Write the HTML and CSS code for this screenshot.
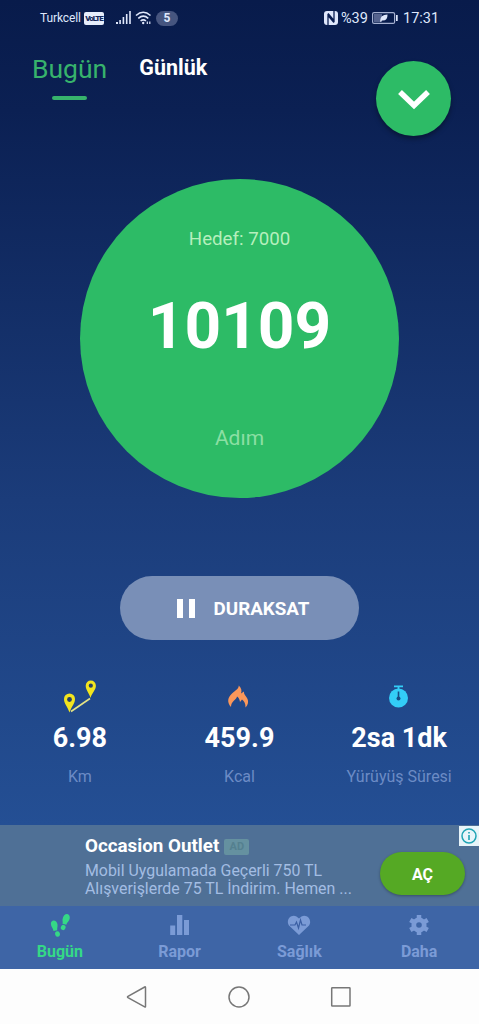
FILE: index.html
```html
<!DOCTYPE html>
<html lang="tr">
<head>
    <meta charset="UTF-8">
    <meta name="viewport" content="width=device-width, initial-scale=1.0">
    <title>Adımsayar</title>
    <link rel="stylesheet" href="styles.css">
</head>
<body>
    <div class="app">
        <div class="status-bar">
            <div class="status-left">
                <span class="carrier">Turkcell</span>
                <span class="volte">VoLTE</span>
                <svg class="signal" width="15" height="14" viewBox="0 0 15 14" fill="#dfe7fb">
                    <rect x="0" y="11" width="2" height="2"/>
                    <rect x="3.3" y="9" width="1.6" height="4"/>
                    <rect x="6.6" y="6" width="1.6" height="7"/>
                    <rect x="9.9" y="3" width="1.6" height="10"/>
                    <rect x="13.2" y="0" width="1.6" height="13"/>
                </svg>
                <svg class="wifi" width="17" height="14" viewBox="0 0 17 14" fill="none" stroke="#dfe7fb" stroke-width="1.6">
                    <path d="M1 4.5q7.200 -6.500 14.500 0M3.300 7.300q5 -4.300 10 0M5.600 10q2.700 -2.200 5.400 0"/>
                    <circle cx="8.200" cy="12" r="1.200" fill="#dfe7fb" stroke="none"/>
                    <path d="M12.300 10.500v2.500M14.800 10.500v2.500" stroke-width="1.200"/>
                </svg>
                <span class="badge">5</span>
            </div>
            <div class="status-right">
                <svg width="14" height="14" viewBox="0 0 14 14">
                    <rect width="14" height="14" rx="3" fill="#dfe7fb"/>
                    <path d="M4 14V4.500L10 11.500M10 0v9.500L4 2.500" fill="none" stroke="#0a1d50" stroke-width="1.300"/>
                </svg>
                <span class="percent">%39</span>
                <svg class="battery" width="26" height="12" viewBox="0 0 26 12">
                    <rect x=".6" y=".6" width="22" height="10.800" rx="1.500" fill="none" stroke="#a5b0d0" stroke-width="1.200"/>
                    <rect x="2" y="2" width="8" height="8" fill="#56648f"/>
                    <path d="M8 9.500q0-7 7.500-7q.3 6.500-5.500 6l-1.300 1.300z" fill="#dfe7fb"/>
                    <rect x="24" y="3" width="1.700" height="6" fill="#dfe7fb"/>
                </svg>
                <span class="clock">17:31</span>
            </div>
        </div>

        <div class="header">
            <div class="tab active">Bugün</div>
            <div class="tab">Günlük</div>
            <div class="expand-btn">
                <svg width="34" height="22" viewBox="0 0 34 22" fill="none" stroke="#fff" stroke-width="5.500">
                    <path d="M3 3l14 13.500l14-13.500"/>
                </svg>
            </div>
        </div>

        <div class="steps-circle">
            <div class="goal">Hedef: 7000</div>
            <div class="steps">10109</div>
            <div class="steps-label">Adım</div>
        </div>

        <div class="pause-btn">
            <svg width="18" height="20" viewBox="0 0 18 20" fill="#fff">
                <rect width="6" height="19"/>
                <rect x="12" width="6" height="19"/>
            </svg>
            <span>DURAKSAT</span>
        </div>

        <div class="stats">
            <div class="stat">
                <svg width="34" height="34" viewBox="0 0 34 34">
                    <path d="M8 32.500L27 19.500" stroke="#e5e385" stroke-width="1.600"/>
                    <path d="M6.500 33.500C4.500 27.500 1 24.500 1 20a5.500 5.500 0 0 1 11 0C12 24.500 8.500 27.500 6.500 33.500z" fill="#f3e51e"/>
                    <path d="M27.500 19C26 13.500 22.700 11 22.700 6.700a5 5 0 0 1 10.200 0C32.900 11 29 13.500 27.500 19z" fill="#f3e51e"/>
                    <circle cx="6.500" cy="20.500" r="2.400" fill="#294064"/>
                    <circle cx="27.800" cy="6.700" r="2.100" fill="#294064"/>
                </svg>
                <div class="value">6.98</div>
                <div class="label">Km</div>
            </div>
            <div class="stat">
                <svg width="34" height="34" viewBox="0 0 34 34" fill="#fb975a">
                    <path d="M9 28C4.500 23 6 18 10 14.500C14 11 16.500 10 16.800 6.500C19.500 9 20 12 19 14.500L22 12.500C21.500 15 23.500 16.500 25 19C27 22.500 26 26 23.500 28.500C23.500 24.500 22.500 22.500 20 20.500L18 23C17.500 20 16.500 18.500 15 17.500C14.500 21 9 22 9 28z"/>
                </svg>
                <div class="value">459.9</div>
                <div class="label">Kcal</div>
            </div>
            <div class="stat">
                <svg width="34" height="34" viewBox="0 0 34 34">
                    <circle cx="16.500" cy="19" r="9.500" fill="#33cdf7"/>
                    <path d="M12 7.300h9M16.500 6.500v4" stroke="#33cdf7" stroke-width="1.800"/>
                    <path d="M16.500 12.500v7" stroke="#174c86" stroke-width="1.600"/>
                    <circle cx="16.500" cy="19.500" r="2" fill="#174c86"/>
                </svg>
                <div class="value">2sa 1dk</div>
                <div class="label">Yürüyüş Süresi</div>
            </div>
        </div>

        <div class="ad">
            <div class="ad-text">
                <div class="ad-title">Occasion Outlet <span class="ad-tag">AD</span></div>
                <div class="ad-desc">Mobil Uygulamada Geçerli 750 TL<br>Alışverişlerde 75 TL İndirim. Hemen ...</div>
            </div>
            <div class="ad-btn">AÇ</div>
            <svg class="ad-info" width="20" height="20" viewBox="0 0 20 20">
                <rect width="20" height="20" fill="#e8f5fa"/>
                <circle cx="10" cy="10" r="7" fill="none" stroke="#20a4b5" stroke-width="1.500"/>
                <path d="M10 9v5M10 6v1.600" stroke="#20a4b5" stroke-width="1.600"/>
            </svg>
        </div>

        <div class="bottom-nav">
            <div class="nav-item active">
                <svg width="24" height="26" viewBox="0 0 24 26" fill="#35d886">
                    <path d="M2.900 11C2.500 6.500 8.800 6 9.500 11.500C9.800 14 8.800 15.500 9.300 17.300L5.500 18C5 15 3.200 14 2.900 11z"/>
                    <ellipse cx="9.500" cy="21" rx="2.400" ry="2.700" transform="rotate(-12 9.500 21)"/>
                    <path d="M14.500 6.500C15.500 -.5 22.500 -.5 21.700 5.500C21.300 8.500 19 9 18.300 11.800L14.500 10.800C15 9 14.400 8.500 14.500 6.500z"/>
                    <ellipse cx="15.200" cy="14.500" rx="2.300" ry="2.600" transform="rotate(25 15.200 14.500)"/>
                </svg>
                <span>Bugün</span>
            </div>
            <div class="nav-item">
                <svg width="24" height="26" viewBox="0 0 24 26" fill="#7b9bd6">
                    <rect x="2.200" y="12.500" width="5" height="9.500"/>
                    <rect x="9" y="2" width="5.300" height="20"/>
                    <rect x="16" y="7" width="5" height="15"/>
                </svg>
                <span>Rapor</span>
            </div>
            <div class="nav-item">
                <svg width="24" height="26" viewBox="0 0 24 26">
                    <path d="M12 22L2.500 13C-2 8 3.500 .5 9.500 3.500L12 5.500l2.500-2C20.500 .5 26 8 21.500 13z" fill="#7b9bd6"/>
                    <path d="M3 12h5l1.500-3l2 6l2-8l1.500 5h4" fill="none" stroke="#3b5fa3" stroke-width="1.200"/>
                </svg>
                <span>Sağlık</span>
            </div>
            <div class="nav-item">
                <svg width="24" height="26" viewBox="0 0 24 26" fill="none" stroke="#7b9bd6">
                    <circle cx="12" cy="12" r="5.200" stroke-width="4.800"/>
                    <path d="M12 2v4M12 18v4M3.300 7l3.500 2M17.200 15l3.500 2M3.300 17l3.500-2M17.200 9l3.500-2" stroke-width="4.500"/>
                </svg>
                <span>Daha</span>
            </div>
        </div>

        <div class="system-nav">
            <svg width="22" height="22" viewBox="0 0 22 22"><path d="M19.500 1.500v19q0 .8-.8.4L2 11.700q-1-.7 0-1.400L18.700 1q.8-.4.8.5z"/></svg>
            <svg width="22" height="22" viewBox="0 0 22 22"><circle cx="11" cy="11" r="10"/></svg>
            <svg width="22" height="22" viewBox="0 0 22 22"><rect x="1.700" y="1.700" width="18.300" height="18.300" rx=".6"/></svg>
        </div>
    </div>
</body>
</html>
```
FILE: styles.css
```css
* {
    box-sizing: border-box;
}
body {
    margin: 0;
    font-family: Roboto, "Liberation Sans", sans-serif;
    color: #fff;
}
svg {
    display: block;
    flex-shrink: 0;
}
.app {
    width: 479px;
    height: 1024px;
    display: flex;
    flex-direction: column;
    align-items: center;
    overflow: hidden;
    background: linear-gradient(#081b4b 0, #0b2053 110px, #1b3c7a 500px, #244f94 825px);
}
.status-bar {
    width: 100%;
    height: 36px;
    padding: 0 40px;
    display: flex;
    justify-content: space-between;
    align-items: center;
    color: #dfe7fb;
}
.status-left,
.status-right {
    display: flex;
    align-items: center;
}
.carrier {
    font-size: 12px;
    letter-spacing: -0.1px;
    width: 42px;
    white-space: nowrap;
}
.volte {
    width: 20px;
    height: 13px;
    margin-left: 2px;
    border-radius: 2px;
    background: #e6edfb;
    color: #14285a;
    font-size: 8px;
    font-weight: 900;
    line-height: 13px;
    letter-spacing: -1px;
    text-align: center;
}
.signal {
    margin-left: 12px;
}
.wifi {
    margin-left: 4px;
}
.badge {
    width: 22px;
    height: 15px;
    margin-left: 4px;
    border-radius: 8px;
    background: #46557f;
    font-size: 12px;
    font-weight: bold;
    line-height: 15px;
    text-align: center;
}
.percent {
    width: 27px;
    margin-left: 3px;
    font-size: 14.5px;
}
.battery {
    margin-left: 4px;
}
.clock {
    width: 36px;
    margin-left: 5px;
    font-size: 14.5px;
}
.header {
    width: 100%;
    height: 143px;
    padding: 16px 28px 0 32px;
    display: flex;
    align-items: flex-start;
}
.tab {
    margin: 2px 0 0 32px;
    font-size: 21.5px;
    font-weight: bold;
    line-height: 28px;
}
.tab.active {
    margin: 0;
    color: #37b36c;
    font-size: 26.5px;
    font-weight: normal;
    line-height: 34px;
}
.tab.active::after {
    content: "";
    display: block;
    width: 35px;
    height: 4px;
    margin: 10px auto 0;
    border-radius: 2px;
    background: #37b36c;
}
.expand-btn {
    width: 75px;
    height: 75px;
    margin: 9px 0 0 auto;
    padding-top: 3px;
    border-radius: 50%;
    background: #2dbb66;
    box-shadow: 0 3px 5px rgba(0, 0, 0, 0.35);
    display: flex;
    justify-content: center;
    align-items: center;
}
.steps-circle {
    width: 319px;
    height: 319px;
    padding-top: 48px;
    border-radius: 50%;
    background: #2dbb66;
    text-align: center;
}
.goal {
    color: #b6efbd;
    font-size: 18.7px;
    line-height: 24px;
}
.steps {
    margin-top: 38px;
    font-size: 64px;
    font-weight: bold;
    line-height: 76px;
}
.steps-label {
    margin-top: 61px;
    color: #8bdfa3;
    font-size: 21px;
    line-height: 24px;
}
.pause-btn {
    width: 239px;
    height: 64px;
    margin-top: 78px;
    border-radius: 32px;
    background: #798fb7;
    display: flex;
    justify-content: center;
    align-items: center;
    gap: 19px;
    padding: 2px 0 0 7px;
    font-size: 18.8px;
    font-weight: bold;
}
.stats {
    width: 100%;
    height: 185px;
    padding-top: 39px;
    display: grid;
    grid-template-columns: repeat(3, 1fr);
}
.stat {
    display: flex;
    flex-direction: column;
    align-items: center;
}
.value {
    margin-top: 9px;
    font-size: 27px;
    font-weight: bold;
    line-height: 32px;
}
.label {
    margin-top: 13px;
    color: #6c8bc5;
    font-size: 16px;
    line-height: 20px;
}
.ad {
    position: relative;
    width: 100%;
    height: 81px;
    padding: 11px 14px 0 85px;
    display: flex;
    justify-content: space-between;
    background: #4f7096;
}
.ad-title {
    display: flex;
    align-items: center;
    gap: 5px;
    font-size: 18.8px;
    font-weight: bold;
    line-height: 21px;
    white-space: nowrap;
}
.ad-tag {
    width: 25px;
    height: 16px;
    border-radius: 2px;
    background: #6591a0;
    color: #54808f;
    font-size: 11px;
    line-height: 16px;
    text-align: center;
}
.ad-desc {
    margin-top: 5px;
    color: #a3bde3;
    font-size: 15.9px;
    line-height: 18px;
    white-space: nowrap;
}
.ad-btn {
    width: 85px;
    height: 43px;
    margin-top: 16px;
    border-radius: 22px;
    background: #55a924;
    box-shadow: 0 1px 3px rgba(0, 0, 0, 0.3);
    font-size: 16px;
    font-weight: bold;
    line-height: 45px;
    text-align: center;
}
.ad-info {
    position: absolute;
    top: 1px;
    right: 0;
}
.bottom-nav {
    width: 100%;
    height: 63px;
    padding-top: 7px;
    display: grid;
    grid-template-columns: repeat(4, 1fr);
    background: #3e65a6;
}
.nav-item {
    display: flex;
    flex-direction: column;
    align-items: center;
    color: #7b9bd6;
    font-size: 16px;
    font-weight: bold;
    line-height: 20px;
}
.nav-item span {
    margin-top: 3px;
}
.nav-item.active {
    color: #35d886;
}
.system-nav {
    width: 100%;
    flex: 1;
    display: flex;
    justify-content: center;
    gap: 80px;
    padding: 17px 1px 0 0;
    background: #fdfdfd;
}
.system-nav svg {
    fill: none;
    stroke: #777;
    stroke-width: 1.5;
}
```
